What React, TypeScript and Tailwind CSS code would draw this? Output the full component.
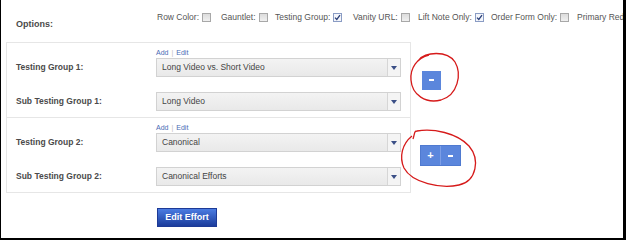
import React from "react";

type Opt = { label: string; checked?: boolean; w: string };

const OPTIONS: Opt[] = [
  { label: "Row Color:", checked: false, w: "w-[64px]" },
  { label: "Gauntlet:", checked: false, w: "w-[54px]" },
  { label: "Testing Group:", checked: true, w: "w-[78px]" },
  { label: "Vanity URL:", checked: false, w: "w-[65px]" },
  { label: "Lift Note Only:", checked: true, w: "w-[73px]" },
  { label: "Order Form Only:", checked: false, w: "w-[86px]" },
  { label: "Primary Red", w: "w-[60px]" },
];

function Checkbox({ checked }: { checked: boolean }) {
  if (checked) {
    return (
      <span className="ml-[3px] inline-flex h-[9px] w-[9px] shrink-0 items-center justify-center border border-[#8a9cc4] bg-[#f4f6fb]">
        <svg width="7" height="7" viewBox="0 0 7 7">
          <path d="M1 3.6 L2.8 5.4 L6 1.2" fill="none" stroke="#2a3f78" strokeWidth="1.3" />
        </svg>
      </span>
    );
  }
  return <span className="ml-[3px] inline-block h-[9px] w-[9px] shrink-0 border border-[#a8a8a8] bg-linear-to-b from-[#dcdcdc] to-[#f0f0f0]" />;
}

function Select({ value }: { value: string }) {
  return (
    <div className="flex h-[19px] w-[247px] border border-[#d2d2d2] bg-linear-to-b from-[#f3f3f3] to-[#e9e9e9]">
      <div className="flex flex-1 items-center pl-[5px] text-[8.5px] text-[#444]">{value}</div>
      <div className="flex w-[13px] items-center justify-center border-l border-[#d6d6d6] bg-[#f4f4f4]">
        <span className="h-0 w-0 border-x-[3px] border-t-[4px] border-x-transparent border-t-[#3b4f86]" />
      </div>
    </div>
  );
}

function AddEdit() {
  return (
    <div className="flex h-[9px] items-center text-[7px] leading-none text-[#4a6bb5]">
      Add <span className="mx-[3px] text-[#bbb]">|</span> Edit
    </div>
  );
}

function Group({ n, main, sub }: { n: number; main: string; sub: string }) {
  return (
    <div className="px-[9px] pt-[5px] pb-[6px]">
      <div className="flex">
        <div className="w-[140px] shrink-0" />
        <AddEdit />
      </div>
      <div className="mt-[1px] flex items-center">
        <div className="w-[140px] shrink-0 text-[8.5px] font-bold text-[#4a4a4a]">Testing Group {n}:</div>
        <Select value={main} />
      </div>
      <div className="mt-[15px] flex items-center">
        <div className="w-[140px] shrink-0 text-[8.5px] font-bold text-[#4a4a4a]">Sub Testing Group {n}:</div>
        <Select value={sub} />
      </div>
    </div>
  );
}

function BlueBtn({ children }: { children: React.ReactNode }) {
  return (
    <span className="flex h-[19px] w-[19px] items-center justify-center bg-[#5b86dc] text-[11px] font-bold leading-none text-white">
      {children}
    </span>
  );
}

export default function App() {
  return (
    <div className="relative h-[240px] w-[626px] overflow-hidden border-b-2 border-l border-r-[3px] border-black bg-white font-['Liberation_Sans',Arial,sans-serif]">
      <div className="pl-[5px]">
        {/* options row */}
        <div className="flex h-[42px] items-start">
          <div className="mt-[19px] w-[151px] shrink-0 pl-[10px] text-[9px] font-bold leading-[10px] text-[#4a4a4a]">Options:</div>
          <div className="mt-[12px] flex shrink-0 items-center whitespace-nowrap text-[8.5px] leading-[10px] text-[#555]">
            {OPTIONS.map((o) => (
              <span key={o.label} className={`flex shrink-0 items-center ${o.w}`}>
                {o.label}
                {o.checked !== undefined && <Checkbox checked={o.checked} />}
              </span>
            ))}
          </div>
        </div>

        {/* group 1 */}
        <div className="flex items-center">
          <div className="w-[405px] shrink-0 border border-[#e6e6e6]">
            <Group n={1} main="Long Video vs. Short Video" sub="Long Video" />
          </div>
          <div className="ml-[11px] flex">
            <BlueBtn>
              <span className="block h-[2px] w-[5px] bg-white" />
            </BlueBtn>
          </div>
        </div>

        {/* group 2 */}
        <div className="flex items-center">
          <div className="w-[405px] shrink-0 border border-t-0 border-[#e6e6e6]">
            <Group n={2} main="Canonical" sub="Canonical Efforts" />
          </div>
          <div className="ml-[9px] flex border border-[#4f7ad0]">
            <BlueBtn>+</BlueBtn>
            <span className="w-px bg-[#7c9ee6]" />
            <BlueBtn>
              <span className="block h-[2px] w-[5px] bg-white" />
            </BlueBtn>
          </div>
        </div>

        <div className="mt-[15px] pl-[151px]">
          <button className="block h-[19px] w-[60px] border border-[#1d3a96] bg-linear-to-b from-[#4b7ce2] to-[#1c3c9c] text-[9px] font-bold text-white">
            Edit Effort
          </button>
        </div>
      </div>

      {/* red annotation marks */}
      <svg className="pointer-events-none absolute left-0 top-0" width="626" height="240">
        <path
          d="M418 60 C424 52 446 50 454 62 C461 74 457 95 440 100 C425 104 411 95 410 80 C409 68 416 58 428 55"
          fill="none"
          stroke="#d61a1a"
          strokeWidth="1.3"
        />
        <path
          d="M412 139 C414 133 413 131 416 131 C432 128 456 133 468 146 C479 159 476 181 458 185 C440 189 411 183 403 168 C398 157 401 144 411 136"
          fill="none"
          stroke="#d61a1a"
          strokeWidth="1.3"
        />
      </svg>
    </div>
  );
}
